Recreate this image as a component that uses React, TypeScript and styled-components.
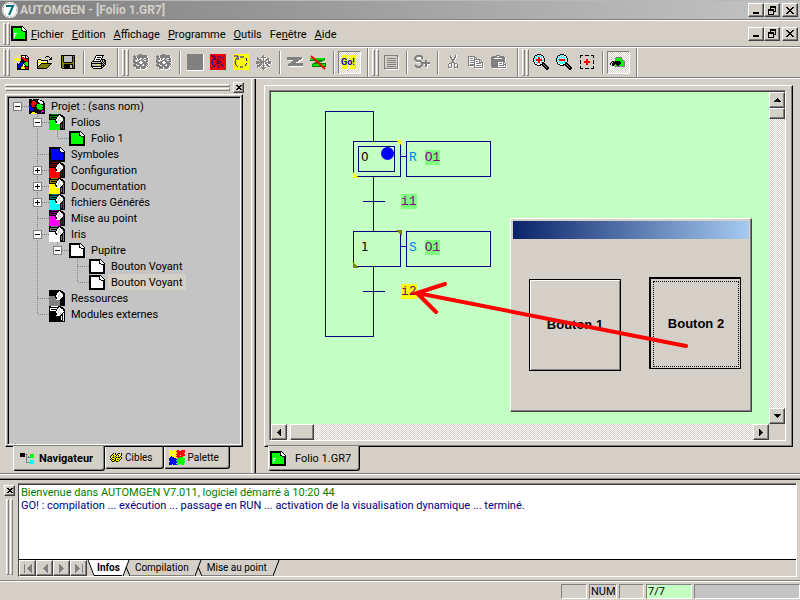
import React from "react";
import styled, { createGlobalStyle, css } from "styled-components";

const face = "#d4d0c8";
const shade = "#808080";
const dark = "#404040";
const navy = "#000080";
const dither = "repeating-conic-gradient(#ffffff 0 25%, #d4d0c8 0 50%) 0 0 / 2px 2px";

const GlobalStyle = createGlobalStyle`
  *, *::before, *::after { box-sizing: border-box; }
  body { margin: 0; background: ${face}; color: #000; font: 11px/13px Roboto, "Liberation Sans", Arial, sans-serif; }
  button { font: inherit; color: inherit; margin: 0; padding: 0; border: 0; background: none; border-radius: 0; }
  svg { display: block; flex: none; }
`;

const raised = css`
  background: ${face};
  border: 1px solid;
  border-color: #fff ${dark} ${dark} #fff;
  box-shadow: inset -1px -1px 0 ${shade};
`;

/* ---------- pixel drawings ---------- */

const palette: Record<string, string> = {
  K: "#000000", W: "#ffffff", G: "#808080", L: "#00ff00", R: "#ff0000", B: "#0000ff",
  Y: "#ffff00", O: "#808000", C: "#00ffff", M: "#ff00ff", N: "#000080", T: "#008080", S: "#c0c0c0", D: "#008000",
};

function Pixels({ rows, colors = {} }: { rows: string[]; colors?: Record<string, string> }) {
  const runs: React.ReactElement[] = [];
  rows.forEach((row, y) => {
    let x = 0;
    while (x < row.length) {
      let end = x + 1;
      while (end < row.length && row[end] === row[x]) end++;
      const fill = colors[row[x]] ?? palette[row[x]];
      if (fill) runs.push(<rect key={`${x}-${y}`} x={x} y={y} width={end - x} height={1} fill={fill} />);
      x = end;
    }
  });
  const width = Math.max(...rows.map((r) => r.length));
  return (
    <svg width={width} height={rows.length} shapeRendering="crispEdges" aria-hidden="true">
      {runs}
    </svg>
  );
}

const sheetRows = [
  "KKKKKKKKKKKK....",
  "KKKKKKKKKKKWK...",
  "KKFFFFFFFFKWWK..",
  "KKFFFFFFFFKWWWK.",
  "KKFFFFFFFFKKWWWK",
  "KKFFFFFFFFFFKKKK",
  "KKFFFFFFFFFFFFKK",
  "KKFFFFFFFFFFFFKK",
  "KKFFFFFFFFFFFFKK",
  "KKFFFFFFFFFFFFKK",
  "KKFFFFFFFFFFFFKK",
  "KKFFFFFFFFFFFFKK",
  "KKFFFFFFFFFFFFKK",
  "KKKKKKKKKKKKKKKK",
  "KKKKKKKKKKKKKKKK",
];
const folioRows = [
  ...sheetRows.slice(0, 7),
  "KKFWWWFFFFFFFFKK",
  "KKFWFFFFFFFFFFKK",
  "KKFWWFFFFFFFFFKK",
  "KKFWFFFFFFFFFFKK",
  "KKFWFFFFFFFFFFKK",
  ...sheetRows.slice(12),
];
const stackRows = [
  "KKDDDDDDDKKK....",
  "KKKKKKKKKKWKKK..",
  "KDDDDDDDKWWWKKK.",
  "KDKKKKKKWWSWWDKK",
  "KDDDDDDKWWSWWWKK",
  "KKKKKKKWWSWWWWDK",
  "FFFFFFKWWSWSWWKK",
  "FFFFFFKKWWWSWKDK",
  "FFFFFFFKSWWWKKDK",
  "FFFFFFFWWWWKKKDK",
  "FFFFFFFFFFFKDKDK",
  "FFFFFFFFFFFKDKDK",
  "FFFFFFFFFFFKDKDK",
  "FFFFFFFFFFFKDKDK",
  "FFFFFFFFFFFKKKDK",
  "FFFFFFFFFFFKKKKK",
];
const projectRows = [
  "KKK.KKKKKK......",
  "KKKKKKKKKWWKK...",
  "KKKRRRKKKWWWWKK.",
  "KKKRRRRKKKWWWWK.",
  "KKRRRRRRKKKSWWKK",
  "KKRRRRRKLLLLKKKK",
  "BKKRRKKKLLLLLLKK",
  "BBKRRRKLLLLLLLKK",
  "BBBKKKKKLLLLLKKK",
  "BBBBBKKKLLLLLLKK",
  "KBBBBKKKKKLLLKKK",
  "KBBBKKKKKKKKKMKK",
  "KKKKKKKKKKKKMMMK",
  "KKKYYYKKKKKKMKKK",
  "KKYYYYYYKKKKKKKK",
];
const newRows = [
  "...Y...KKKKKK...",
  "Y..Y..YKWWWKWK..",
  ".Y.Y.Y.KRRWKWWK.",
  "..YYY..KRRRKKKK.",
  "YYYWYYYKKRRRRRK.",
  "..YYY..KKKRRRRK.",
  ".Y.Y.YKKKKKKRRK.",
  "Y..Y..KBBKKLLLK.",
  "...K.KBBBKLLLLK.",
  "...KKBBBKWKLLLK.",
  "...KBBBBKWWKLLK.",
  "...KBBKKYYKKKKK.",
  "...KBBKYYYYKRRK.",
  "...KKKKYYYYKRRK.",
  "...KKKKKKKKKKKK.",
];
const openRows = [
  ".........KKK....",
  "........K...K.K.",
  ".............KK.",
  ".KKK........KKK.",
  "KYWYKKKKKKK.....",
  "KWYWYWYWYWK.....",
  "KYWYWYWYWYK.....",
  "KWYWKKKKKKKKKKK.",
  "KYWKOOOOOOOOOK..",
  "KWKOOOOOOOOOK...",
  "KKOOOOOOOOOK....",
  "KOOOOOOOOOK.....",
  "KKKKKKKKKK......",
];
const saveRows = [
  "KKKKKKKKKKKKKK",
  "KOKSSSSSSSSKSK",
  "KOKSSSSSSSSKKK",
  "KOKSSSSSSSSKOK",
  "KOKSSSSSSSSKOK",
  "KOKSSSSSSSSKOK",
  "KOKSSSSSSSSKOK",
  "KOOKKKKKKKKOOK",
  "KOOOOOOOOOOOOK",
  "KOOKKKKKKKKKOK",
  "KOOKKKKKKSSKOK",
  "KOOKKKKKKSSKOK",
  "KOOKKKKKKSSKOK",
  ".KKKKKKKKKKKKK",
];
const printRows = [
  ".....KKKKKKKK...",
  "....KWWWWWWK....",
  "....KWKKKKWK....",
  "...KWWWWWWK.....",
  "...KWKKKKWKKKK..",
  "..KWWWWWWKSKSKK.",
  ".KKKKKKKKKSKSKK.",
  "KSSSSSSSSSKSKSK.",
  "KKKKKKKKKKKKSKK.",
  "KSSSSSYYSSKSKSK.",
  "KSSSSSSSSSKKKK..",
  "KKKKKKKKKKKSK...",
  ".KWWWWWWWWKK....",
  "..KKKKKKKKK.....",
];
const machineRows = [
  "......GGG.......",
  ".G..GGGGGGGGGG..",
  "GGG.GGGGGGGGGGW.",
  "GGGWGGGGGGGGGGW.",
  ".GGGWGGWWGGWWGGW",
  "GGGGWGWWGGWGGGGW",
  "GGWWWWGGGGGWWGGW",
  "GGGWGGGWWGGGGGGW",
  "GGGGGGWWWWGGGGW.",
  ".GGGGGGWWGGGGGGW",
  "GGGWGGGGGGWGGGGW",
  "GGGGWWGGGWWGGGW.",
  ".GGGGGGGGGGGGWGW",
  "..WGGGGWGGGGGWW.",
  "...GGGGWGGGGWW..",
  "....WWWW.WWW....",
];
const updownRows = [
  ".......G........",
  "......GGW.......",
  ".G...GGGGG......",
  ".GG..WWGWWWGG...",
  ".GGGG..GW.GGGW..",
  "...GGGWGWGGWGW..",
  "GGG.GGGGGGW.GGG.",
  "GGGGGGGGWGGGGGGW",
  "GGG.GG.GWGGWGGGW",
  "...GGGWGWWGGWWW.",
  ".GGGGWGGGWGGGW..",
  ".GGGW..GWWW.GG..",
  ".GW..GGGGG...W..",
  "......GGGW......",
  ".......GW.......",
];
const linkRows = [
  "GGGGGGGGGGGGGGG.",
  "GGGGGGGGGGGGGGGW",
  "GGGGGGGGGGGGGGWW",
  ".WWWWWGGGGGGWWW.",
  ".....GGGGGGWW...",
  "....GGGGGWWW....",
  "..GGGGGGGGGGGGGG",
  ".GGGGGGGGGGGGGGG",
  ".GGGGGGGGGGGGGGG",
  "..WWWWWWWWWWWWWW",
];
const cutRows = [
  "..GW...GW.", "..GW...GW.", "..GGW.GGW.", "...GW.GW..", "...GGGGW..", "....GGW...",
  "....GGW...", "...GGGGW..", ".GGGW.GGG.", "GWWGW.GWWG", "GW.GW.GW.G", "GW.GW.GW.G", "GGGGW.GGGG", ".WWW...WW.",
];
const copyRows = [
  "GGGGGGG.........", "GWWWWWGG........", "GWGGGWGWG.......", "GWWWWWGGGGGG....", "GWGGGGGWWWWGG...",
  "GWWWWWGWGGWGWG..", "GWGGGGGWWWWGGGG.", "GWWWWWGWGGGGGWGW", "GWGGGGGWWWWWWWGW", "GGGGGGGWGGGGGWGW",
  ".WWWWWGWWWWWWWGW", "......GGGGGGGGGW", ".......WWWWWWWWW",
];
const pasteRows = [
  ".....GGGG.......", ".GGGGGWWGGGGG...", "GGGGGGGGGGGGGG..", "GGGWWWWWWWWGGGW.", "GGGGGGGGGGGGGGW.",
  "GGGGGGGGGGGGGGW.", "GGGGGGGGGGGGGGW.", "GGGGGGGWWWWWGG..", "GGGGGGGWGGGWGWG.", "GGGGGGGWWWWWGGGW",
  "GGGGGGGWGGGGGWGW", "GGGGGGGWWWWWWWGW", ".GGGGGGGGGGGGGGW", "..WWWWWWWWWWWWWW",
];
const zoomRows = (plus: boolean) => [
  "....KKKK........", "..KKCWCWKK......", ".KWCWCWCWWK.....", ".KCW" + (plus ? "WRR" : "CWC") + "WCWK.....",
  "KCWC" + (plus ? "WRR" : "WCW") + "WCWWK....", "KWCRRRRRRWCK....", "KCWRRRRRRCWK....",
  "KWCW" + (plus ? "WRR" : "WCW") + "WCWWK....", ".KWC" + (plus ? "CRR" : "CWC") + "WCKK.....",
  ".KWWCWCWWKKK....", "..KKWWWKKKGKK...", "....KKKK.KKGKK..", "..........KKGKK.", "...........KKGKK", "............KKKK", ".............KK.",
];
const targetRows = [
  "KKK..KKKK..KKK", "K............K", "K............K", "..............", "......RR......",
  "K.....RR.....K", "K...RRRRRR...K", "K...RRRRRR...K", "K.....RR.....K", "......RR......",
  "..............", "K............K", "K............K", "KKK..KKKK..KKK",
];
const watchRows = [
  "......GGGGGG....", ".....GLLLLLG.W..", ".....GLLLLLGGW..", ".....GLLLLLLLG..", "..KKGKKKKKLLLLG.",
  ".K.KKKKKKKKLLLG.", "K.KKKKKKKKKLLLG.", "K.KKKLKKKKLLLLG.", "..KKGLLKKLLLLLG.", ".....GGGGGGGGGG.",
];
const navRows = [
  "KKKKK..........", "KKKKKGGG..LLLL", "KKKKK.G...LLLL", "KKKKK.G.G.LLLL", "......GGGGLLLL", "......G.......",
  "......G.......", "......G...CCCC", "......G...CCCC", "......GGGGCCCC", "..........CCCC",
];
const targetsRows = [
  "...K.K..KK.K", "..KYYK.KYYYK", ".KYKYYKYKYYK", "KYYOYKYYOYKY", "KYOKOYKOKKYK", ".KYYYKYYYOYK", "KYKOYKYKOYK.", ".KYYKKYYYK..", "..KKO.KKO...",
];
const paletteRows = [
  "YYY.YYYYRR..RRRR", "YYYYYYYRRRRRRRRR", ".YYYYYYYRRRRRRRR", "YYYYYYYYRRRRRRR.", "YYY.YYYRRRRRRRRR", "YYYYYYYYRRR.RRRR",
  "..BYYYYRRRRRRR..", ".BBBBYYYLRRLLL..", "BBBBBBB.LLLLLLLL", "BBBBBBBBLLLLLLLL", "BBBBBBBLLLLLLLL.", ".BBBBBBBLLLLLLLL",
  "BBBBBBBBLLLLLLLL", "BBBBBBB.LLLLLLL.", "BBB.BBBBLL..LLL.",
];

const LoopIcon = ({ bg, crossed }: { bg: string; crossed?: boolean }) => (
  <svg width="16" height="16" aria-hidden="true">
    <rect width="16" height="16" fill={bg} />
    <path d="M5 2H1M5 2V6M4 4C1 7 2 11 5 13M7 13H10M12 12L14 9M14 7L13 4M11 3H7" fill="none" stroke="#0000c0" strokeWidth="1" />
    {crossed && <path d="M1 1L15 15M15 1L1 15M5 8H12M8 4V12" stroke="#400040" strokeWidth="1" />}
  </svg>
);

const LogoIcon = () => (
  <svg width="16" height="16" aria-hidden="true">
    <circle cx="8" cy="8" r="8" fill="#ffffff" />
    <circle cx="8" cy="8" r="7" fill="none" stroke="#a0a0a0" strokeDasharray="2 1" />
    <path d="M4 4H11L7 13" fill="none" stroke="#007080" strokeWidth="2" />
  </svg>
);

const CrossGlyph = () => (
  <Pixels rows={["KK....KK", ".KK..KK.", "..KKKK..", "...KK...", "..KKKK..", ".KK..KK.", "KK....KK"]} />
);
const SmallCross = () => <Pixels rows={["KK..KK", ".KKKK.", "..KK..", ".KKKK.", "KK..KK"]} />;

/* ---------- caption buttons ---------- */

const CaptionButton = styled.button`
  ${raised}
  width: 16px;
  height: 14px;
  display: flex;
  align-items: center;
  justify-content: center;
  &:last-child { margin-left: 2px; }
`;
const CaptionGroup = styled.div`
  display: flex;
  margin-left: auto;
  padding-right: 2px;
`;

function Captions() {
  return (
    <CaptionGroup>
      <CaptionButton aria-label="Réduire"><Pixels rows={["......", "......", "......", "......", "......", "KKKKKK", "KKKKKK"]} /></CaptionButton>
      <CaptionButton aria-label="Restaurer">
        <Pixels rows={["..KKKKKK", "..KKKKKK", "..K....K", "KKKKKK.K", "KKKKKK.K", "K....KKK", "K....K..", "K....K..", "KKKKKK.."]} />
      </CaptionButton>
      <CaptionButton aria-label="Fermer"><CrossGlyph /></CaptionButton>
    </CaptionGroup>
  );
}

/* ---------- frame ---------- */

const Page = styled.div`
  height: 100vh;
  display: flex;
  flex-direction: column;
  overflow: hidden;
  background: ${face};
`;
const TitleBar = styled.header`
  height: 20px;
  flex: none;
  display: flex;
  align-items: center;
  padding-left: 2px;
  gap: 2px;
  background: linear-gradient(to right, #808080, #c4c4c4);
  border-top: 1px solid #b8b8b8;
  border-bottom: 1px solid ${shade};
`;
const TitleText = styled.h1`
  margin: 0;
  font-size: 12px;
  line-height: 16px;
  font-weight: bold;
  color: ${face};
`;
const MenuBar = styled.nav`
  height: 27px;
  flex: none;
  display: flex;
  align-items: center;
  padding-left: 3px;
  border-top: 1px solid #fff;
  border-bottom: 1px solid ${shade};
`;
const MenuItem = styled.button`
  padding: 3px 4px 1px;
  u { text-underline-offset: 1px; }
`;
const MenuItems = styled.div`
  display: flex;
`;
const Grip = styled.span<{ $length: number; $flat?: boolean }>`
  display: flex;
  flex: none;
  gap: 1px;
  flex-direction: ${(p) => (p.$flat ? "column" : "row")};
  margin-right: ${(p) => (p.$flat ? 0 : 1)}px;
  &::before, &::after {
    content: "";
    border: 1px solid;
    border-color: #fff ${shade} ${shade} #fff;
    ${(p) => (p.$flat ? "height: 3px;" : `width: 3px; height: ${p.$length}px;`)}
  }
`;
const ToolBar = styled.div`
  height: 31px;
  flex: none;
  display: flex;
  border-top: 1px solid #fff;
  border-bottom: 1px solid ${shade};
`;
const Band = styled.div`
  display: flex;
  align-items: center;
  padding: 0 6px 0 3px;
  border-right: 1px solid ${shade};
  box-shadow: 1px 0 0 #fff;
  margin-right: 1px;
`;
const ToolButton = styled.button<{ $pressed?: boolean }>`
  width: 23px;
  height: 23px;
  padding: 0 1px 1px 0;
  display: flex;
  align-items: center;
  justify-content: center;
  ${(p) => p.$pressed && css`
    background: ${dither};
    border: 1px solid;
    border-color: ${shade} #fff #fff ${shade};
  `}
`;
const Separator = styled.span`
  width: 2px;
  height: 23px;
  margin: 0 3px;
  background: ${shade};
  border-right: 1px solid #fff;
`;

/* ---------- main area ---------- */

const Main = styled.main`
  flex: 1;
  min-height: 0;
  display: flex;
  border-top: 1px solid #fff;
  border-bottom: 1px solid ${shade};
`;
const SidePanel = styled.aside`
  width: 252px;
  flex: none;
  display: flex;
  flex-direction: column;
  padding: 1px 7px 2px 5px;
  border-right: 1px solid #fff;
`;
const SideHead = styled.div`
  display: flex;
  align-items: center;
  gap: 3px;
  height: 14px;
  ${Grip} { flex: 1; }
`;
const SmallClose = styled.button`
  ${raised}
  width: 11px;
  height: 11px;
  display: flex;
  align-items: center;
  justify-content: center;
`;
const Raised = styled.div`
  flex: 1;
  min-height: 0;
  display: flex;
  border: 1px solid;
  border-color: #fff #000 #000 #fff;
  box-shadow: inset -1px -1px 0 ${shade};
`;
const TreeFrame = styled(Raised)`
  padding: 1px;
  margin-right: 1px;
`;
const ViewFrame = styled(Raised)`
  padding: 4px 6px 5px 4px;
`;
const Sunken = styled.div`
  flex: 1;
  min-width: 0;
  border: 1px solid;
  border-color: ${shade} #fff #fff ${shade};
  display: flex;
`;
const Tree = styled.ul`
  flex: 1;
  margin: 0;
  padding: 0;
  list-style: none;
  background: #c4c4c4;
  border-top: 1px solid #000;
  border-left: 1px solid #000;
`;
const TreeRow = styled.li`
  display: flex;
  align-items: center;
  height: 16px;
`;
const Guide = styled.span`
  display: grid;
  width: 20px;
  height: 16px;
  > * { grid-area: 1 / 1; }
`;
const Expander = styled.button`
  width: 9px;
  height: 9px;
  margin: 4px 0 0 4px;
  background: #fff;
  border: 1px solid ${shade};
  display: flex;
  align-items: center;
  justify-content: center;
`;
const TreeLabel = styled.span<{ $selected?: boolean }>`
  margin-left: 3px;
  padding: 2px 3px 0;
  line-height: 14px;
  background: ${(p) => (p.$selected ? face : "transparent")};
`;

type Node = { label: string; level: number; icon: "project" | "stack" | "sheet"; color: string; back?: string; box?: "+" | "-"; guides: string[]; selected?: boolean };

/* guide codes: "" blank, "|" through line, "+" branch, "L" last branch, "-" stub */
const nodes: Node[] = [
  { label: "Projet : (sans nom)", level: 0, icon: "project", color: "", box: "-", guides: ["-"] },
  { label: "Folios", level: 1, icon: "stack", color: "#00ff00", back: "#008000", box: "-", guides: ["", "+"] },
  { label: "Folio 1", level: 2, icon: "sheet", color: "#00ff00", guides: ["", "|", "L"] },
  { label: "Symboles", level: 1, icon: "sheet", color: "#0000ff", guides: ["", "+"] },
  { label: "Configuration", level: 1, icon: "stack", color: "#ff0000", back: "#800000", box: "+", guides: ["", "+"] },
  { label: "Documentation", level: 1, icon: "stack", color: "#ffff00", back: "#808000", box: "+", guides: ["", "+"] },
  { label: "fichiers Générés", level: 1, icon: "stack", color: "#00ffff", back: "#008080", box: "+", guides: ["", "+"] },
  { label: "Mise au point", level: 1, icon: "stack", color: "#ff00ff", back: "#800080", guides: ["", "+"] },
  { label: "Iris", level: 1, icon: "stack", color: "#ffffff", back: "#808080", box: "-", guides: ["", "+"] },
  { label: "Pupitre", level: 2, icon: "sheet", color: "#ffffff", box: "-", guides: ["", "|", "L"] },
  { label: "Bouton Voyant", level: 3, icon: "sheet", color: "#ffffff", guides: ["", "|", "", "+"] },
  { label: "Bouton Voyant", level: 3, icon: "sheet", color: "#ffffff", guides: ["", "|", "", "L"], selected: true },
  { label: "Ressources", level: 1, icon: "stack", color: "#808080", back: "#000000", guides: ["", "+"] },
  { label: "Modules externes", level: 1, icon: "stack", color: "#000000", back: "#ffffff", guides: ["", "L"] },
];

function GuideLines({ kind }: { kind: string }) {
  return (
    <svg width="20" height="16" aria-hidden="true" stroke="#808080" strokeDasharray="1 1" shapeRendering="crispEdges">
      {(kind === "|" || kind === "+") && <path d="M8.5 0V16" />}
      {kind === "L" && <path d="M8.5 0V8" />}
      {(kind === "+" || kind === "L" || kind === "-") && <path d="M9 8.5H20" />}
    </svg>
  );
}

function TreeItem({ node }: { node: Node }) {
  return (
    <TreeRow>
      {node.guides.map((g, i) => (
        <Guide key={i}>
          <GuideLines kind={g} />
          {i === node.level && node.box && (
            <Expander aria-label={node.box === "+" ? "Développer" : "Réduire"}>
              <Pixels rows={node.box === "+" ? ["..K..", "..K..", "KKKKK", "..K..", "..K.."] : ["KKKKK"]} />
            </Expander>
          )}
        </Guide>
      ))}
      {node.icon === "project" && <Pixels rows={projectRows} />}
      {node.icon === "stack" && <Pixels rows={stackRows} colors={{ F: node.color, D: node.back ?? "" }} />}
      {node.icon === "sheet" && <Pixels rows={sheetRows} colors={{ F: node.color }} />}
      <TreeLabel $selected={node.selected}>{node.label}</TreeLabel>
    </TreeRow>
  );
}

const TabStrip = styled.div<{ $indent: number }>`
  display: flex;
  align-items: flex-start;
  height: 24px;
  flex: none;
  padding-left: ${(p) => p.$indent}px;
`;
const Tab = styled.button<{ $active?: boolean }>`
  display: flex;
  align-items: center;
  gap: 4px;
  height: ${(p) => (p.$active ? 25 : 22)}px;
  padding: 0 11px 0 6px;
  margin-top: ${(p) => (p.$active ? -1 : 0)}px;
  background: ${face};
  font-weight: ${(p) => (p.$active ? "bold" : "normal")};
  border: solid #000;
  border-width: 0 1px 1px 0;
  border-left: 1px solid #fff;
  border-radius: 0 0 3px 3px;
  box-shadow: inset -1px -1px 0 ${shade};
`;
const SmallTab = styled(Tab)`
  font-size: 10px;
  gap: 3px;
  padding: 0 10px 0 4px;
`;
const FolioTab = styled(Tab)`
  font-weight: normal;
  gap: 9px;
  padding: 0 8px 0 1px;
`;

const WorkArea = styled.section`
  flex: 1;
  min-width: 0;
  display: flex;
  flex-direction: column;
  margin-left: 2px;
  padding: 6px 7px 2px 9px;
  border-left: 1px solid ${shade};
  box-shadow: inset 1px 0 0 #000;
`;
const View = styled.div`
  flex: 1;
  min-width: 0;
  display: grid;
  grid-template: minmax(0, 1fr) 16px / minmax(0, 1fr) 16px;
  border-top: 1px solid ${dark};
  border-left: 1px solid ${dark};
`;
const Canvas = styled.div`
  position: relative;
  overflow: hidden;
  background: #c4ffc4;
`;
const ScrollTrack = styled.div<{ $vertical?: boolean }>`
  display: flex;
  flex-direction: ${(p) => (p.$vertical ? "column" : "row")};
  background: ${dither};
`;
const ScrollButton = styled.button`
  ${raised}
  width: 16px;
  height: 16px;
  display: flex;
  align-items: center;
  justify-content: center;
`;
const Thumb = styled.div<{ $vertical?: boolean }>`
  ${raised}
  ${(p) => (p.$vertical ? "height: 11px; margin-bottom: auto;" : "width: 24px; margin: 0 auto 0 3px;")}
`;

/* ---------- diagram ---------- */

const Placed = styled.div<{ $x: number; $y: number }>`
  position: absolute;
  left: ${(p) => p.$x}px;
  top: ${(p) => p.$y}px;
`;
const Wires = styled.svg`
  position: absolute;
  left: 0;
  top: 0;
`;
const mono = css`
  font: 13px/15px "Liberation Mono", "Courier New", monospace;
`;
const StepBox = styled(Placed)<{ $mark: string }>`
  font: 12px/15px "DejaVu Sans", Verdana, sans-serif;
  width: 48px;
  height: 36px;
  padding: 8px 7px;
  border: 1px solid ${navy};
  &::before, &::after {
    content: "";
    position: absolute;
    width: 6px;
    height: 6px;
    background: ${(p) => p.$mark};
  }
  &::before { top: -2px; right: -2px; clip-path: polygon(0 0, 100% 0, 100% 100%); }
  &::after { bottom: -2px; left: -1px; clip-path: polygon(0 0, 100% 100%, 0 100%); }
`;
const ActiveRing = styled.span`
  position: absolute;
  inset: 4px 5px 4px 4px;
  border: 1px solid ${navy};
  &::after {
    content: "";
    position: absolute;
    right: 0;
    top: 0;
    width: 13px;
    height: 13px;
    border-radius: 50%;
    background: #0000ff;
  }
`;
const ActionBox = styled(Placed)`
  ${mono}
  display: flex;
  gap: 8px;
  width: 85px;
  height: 36px;
  padding: 8px 2px;
  color: #0080ff;
  border: 1px solid ${navy};
`;
const Tag = styled.span<{ $bg?: string }>`
  ${mono}
  align-self: flex-start;
  color: #800080;
  background: ${(p) => p.$bg ?? "#80ff80"};
`;

const Desk = styled(Placed)`
  ${raised}
  width: 242px;
  height: 194px;
  padding: 2px;
`;
const DeskTitle = styled.div`
  height: 18px;
  background: linear-gradient(to right, #0a246a, #a6caf0);
`;
const DeskBody = styled.div`
  display: flex;
  justify-content: space-between;
  align-items: flex-start;
  padding: 38px 8px 0 16px;
`;
const DeskButton = styled.button<{ $focused?: boolean }>`
  width: 92px;
  height: 92px;
  margin-top: ${(p) => (p.$focused ? 0 : 2)}px;
  font: bold 13px/16px "Liberation Sans", Arial, sans-serif;
  border: 1px solid #000;
  ${(p) => p.$focused
    ? css`
        border-width: 2px 1px 1px 2px;
        padding: 2px 1px 1px 2px;
        > span { display: grid; place-items: center; height: 100%; border: 1px dotted #000; }
      `
    : css`box-shadow: inset 1px 1px 0 #fff, inset -1px -1px 0 ${shade};`}
`;

function Diagram() {
  return (
    <Canvas>
      <Wires width="240" height="260" fill="none" stroke={navy} shapeRendering="crispEdges" aria-hidden="true">
        <path d="M102.5 49V19.5H54.5V244.5H102.5V175M102.5 85V139M92 109.5H114M92 199.5H114M129 64.5H135M129 154.5H135" />
      </Wires>
      <StepBox $x={82} $y={49} $mark="#ffff00">0<ActiveRing /></StepBox>
      <ActionBox $x={135} $y={49}>R <Tag>O1</Tag></ActionBox>
      <Placed $x={130} $y={102}><Tag as="div">i1</Tag></Placed>
      <StepBox $x={82} $y={139} $mark="#808000">1</StepBox>
      <ActionBox $x={135} $y={139}>S <Tag>O1</Tag></ActionBox>
      <Placed $x={130} $y={192}><Tag as="div" $bg="#ffff00">i2</Tag></Placed>
      <Desk $x={239} $y={126}>
        <DeskTitle />
        <DeskBody>
          <DeskButton>Bouton 1</DeskButton>
          <DeskButton $focused><span>Bouton 2</span></DeskButton>
        </DeskBody>
      </Desk>
      <Wires width="440" height="270" fill="none" stroke="#ff0000" strokeWidth="4" strokeLinecap="round" pointerEvents="none" aria-hidden="true">
        <path d="M415 254L146 201L174 192M146 201L165 220" />
      </Wires>
    </Canvas>
  );
}

/* ---------- output and status ---------- */

const Splitter = styled.div`
  height: 6px;
  flex: none;
  border-top: 1px solid #fff;
  border-bottom: 1px solid #000;
  box-shadow: inset 0 -1px 0 ${shade};
`;
const OutputPanel = styled.section`
  height: 101px;
  flex: none;
  display: flex;
  gap: 3px;
  padding: 3px 3px 3px 4px;
  border-bottom: 1px solid ${shade};
`;
const OutputSide = styled.div`
  width: 11px;
  display: flex;
  flex-direction: column;
  align-items: center;
  gap: 3px;
  padding-top: 2px;
  ${Grip} { margin: 0; }
`;
const OutputBox = styled.div`
  flex: 1;
  min-width: 0;
  display: flex;
  flex-direction: column;
  border: 1px solid;
  border-color: ${shade} #fff #fff ${dark};
`;
const Log = styled.div`
  flex: 1;
  padding: 1px 2px;
  background: #fff;
  border-top: 1px solid ${dark};
  border-bottom: 1px solid #000;
`;
const LogLine = styled.p<{ $color: string }>`
  margin: 0;
  color: ${(p) => p.$color};
`;
const SheetBar = styled.div`
  display: flex;
  height: 16px;
`;
const SheetNav = styled.button`
  ${raised}
  width: 17px;
  height: 16px;
  display: flex;
  align-items: center;
  justify-content: center;
`;
const SheetTab = styled.button<{ $active?: boolean }>`
  padding: 0 ${(p) => (p.$active ? 2 : 5)}px;
  background: ${(p) => (p.$active ? "#fff" : "transparent")};
  font-size: 10px;
  font-weight: ${(p) => (p.$active ? "bold" : "normal")};
  border-bottom: 1px solid ${(p) => (p.$active ? "#000" : shade)};
`;
const StatusBar = styled.footer`
  height: 19px;
  flex: none;
  display: flex;
  justify-content: flex-end;
  gap: 2px;
  padding: 2px 0 1px;
  border-top: 1px solid #fff;
`;
const StatusCell = styled.div<{ $width: number; $bg?: string }>`
  width: ${(p) => p.$width}px;
  padding-left: 1px;
  line-height: 14px;
  background: ${(p) => p.$bg ?? "transparent"};
  border: 1px solid;
  border-color: ${shade} #fff #fff ${shade};
`;

const arrowLeft = ["...K", "..KK", ".KKK", "KKKK", ".KKK", "..KK", "...K"];
const arrowRight = arrowLeft.map((r) => r.split("").reverse().join(""));
const arrowUp = ["...K...", "..KKK..", ".KKKKK.", "KKKKKKK"];
const arrowDown = [...arrowUp].reverse();
const navLeft = [".....K", "....KK", "...KKK", "..KKKK", ".KKKKK", "..KKKK", "...KKK", "....KK", ".....K"];
const navRight = navLeft.map((r) => r.split("").reverse().join(""));
const gray = { K: "#808080" };

const menus = [["", "F", "ichier"], ["", "E", "dition"], ["", "A", "ffichage"], ["", "P", "rogramme"], ["", "O", "utils"], ["Fe", "n", "être"], ["", "A", "ide"]];

export default function App() {
  return (
    <Page>
      <GlobalStyle />
      <TitleBar>
        <LogoIcon />
        <TitleText>AUTOMGEN - [Folio 1.GR7]</TitleText>
        <Captions />
      </TitleBar>
      <MenuBar>
        <Grip $length={22} />
        <Pixels rows={folioRows} colors={{ F: "#00ff00" }} />
        <MenuItems>
          {menus.map(([a, b, c]) => <MenuItem key={a + b + c}>{a}<u>{b}</u>{c}</MenuItem>)}
        </MenuItems>
        <Captions />
      </MenuBar>
      <ToolBar>
        <Band>
          <Grip $length={27} />
          <ToolButton aria-label="Nouveau"><Pixels rows={newRows} /></ToolButton>
          <ToolButton aria-label="Ouvrir"><Pixels rows={openRows} /></ToolButton>
          <ToolButton aria-label="Enregistrer"><Pixels rows={saveRows} /></ToolButton>
          <Separator />
          <ToolButton aria-label="Imprimer"><Pixels rows={printRows} /></ToolButton>
        </Band>
        <Band>
          <Grip $length={27} />
          <ToolButton aria-label="Compiler"><Pixels rows={machineRows} /></ToolButton>
          <ToolButton aria-label="Compiler tout"><Pixels rows={machineRows} /></ToolButton>
          <Separator />
          <ToolButton aria-label="Arrêt">
            <svg width="17" height="17" aria-hidden="true"><path d="M0 0H17V17H0Z" fill="#fff" /><path d="M0 0H16V16H0Z" fill="#808080" /></svg>
          </ToolButton>
          <ToolButton aria-label="Stop"><LoopIcon bg="#ff0000" crossed /></ToolButton>
          <ToolButton aria-label="Cycle"><LoopIcon bg="#ffff00" /></ToolButton>
          <ToolButton aria-label="Pas"><Pixels rows={updownRows} /></ToolButton>
          <Separator />
          <ToolButton aria-label="Connecter"><Pixels rows={linkRows} /></ToolButton>
          <ToolButton aria-label="Déconnecter">
            <svg width="16" height="15" aria-hidden="true">
              <path d="M0 3H15V5L9 8H16V12H2V9L7 6H0Z" fill="#008000" />
              <path d="M0 3H14V5H0ZM3 9H15V11H3Z" fill="#00e000" />
              <path d="M1 1L15 14" stroke="#ff0000" strokeWidth="2" />
            </svg>
          </ToolButton>
          <Separator />
          <ToolButton $pressed aria-label="Go">
            <svg width="16" height="16" aria-hidden="true">
              <path d="M1 1H7V15H1ZM9 1H15V15H9Z" fill="#ffff00" />
              <text x="0" y="11" fontSize="9" fontWeight="bold" fill="#0000c0">Go!</text>
            </svg>
          </ToolButton>
        </Band>
        <Band>
          <Grip $length={27} />
          <ToolButton aria-label="Liste">
            <svg width="15" height="15" shapeRendering="crispEdges" aria-hidden="true">
              <path d="M1.5 14.5H14.5V1.5" stroke="#fff" fill="none" />
              <path d="M.5 .5H13.5V13.5H.5ZM3 3.5H12M3 5.5H12M3 7.5H12M3 9.5H12M3 11.5H12" stroke="#808080" fill="none" />
            </svg>
          </ToolButton>
          <Separator />
          <ToolButton aria-label="Ajouter un symbole">
            <svg width="16" height="14" fill="none" strokeWidth="2" aria-hidden="true">
              <path d="M9 3V3H3L2 5L3 7H7L8 9L7 12H2M13 6V13M10 9H17" stroke="#fff" />
              <path d="M8 4V2L7 1H3L1 3V4L3 6H6L8 8V10L6 12H3L1 10M12 5V12M8 8H16" stroke="#808080" />
            </svg>
          </ToolButton>
          <Separator />
          <ToolButton aria-label="Couper"><Pixels rows={cutRows} /></ToolButton>
          <ToolButton aria-label="Copier"><Pixels rows={copyRows} /></ToolButton>
          <ToolButton aria-label="Coller"><Pixels rows={pasteRows} /></ToolButton>
        </Band>
        <Band>
          <Grip $length={27} />
          <ToolButton aria-label="Zoom avant"><Pixels rows={zoomRows(true)} /></ToolButton>
          <ToolButton aria-label="Zoom arrière"><Pixels rows={zoomRows(false)} /></ToolButton>
          <ToolButton aria-label="Zoom sélection"><Pixels rows={targetRows} /></ToolButton>
          <Separator />
          <ToolButton $pressed aria-label="Visualisation"><Pixels rows={watchRows} /></ToolButton>
        </Band>
      </ToolBar>
      <Main>
        <SidePanel>
          <SideHead>
            <Grip $length={0} $flat />
            <SmallClose aria-label="Fermer le navigateur"><SmallCross /></SmallClose>
          </SideHead>
          <TreeFrame>
            <Sunken>
              <Tree>{nodes.map((n, i) => <TreeItem key={i} node={n} />)}</Tree>
            </Sunken>
          </TreeFrame>
          <TabStrip $indent={8}>
            <Tab $active><Pixels rows={navRows} />Navigateur</Tab>
            <SmallTab><Pixels rows={targetsRows} />Cibles</SmallTab>
            <SmallTab><Pixels rows={paletteRows} />Palette</SmallTab>
          </TabStrip>
        </SidePanel>
        <WorkArea>
          <ViewFrame>
            <Sunken>
              <View>
                <Diagram />
                <ScrollTrack $vertical>
                  <ScrollButton aria-label="Haut"><Pixels rows={arrowUp} /></ScrollButton>
                  <Thumb $vertical />
                  <ScrollButton aria-label="Bas"><Pixels rows={arrowDown} /></ScrollButton>
                </ScrollTrack>
                <ScrollTrack>
                  <ScrollButton aria-label="Gauche"><Pixels rows={arrowLeft} /></ScrollButton>
                  <Thumb />
                  <ScrollButton aria-label="Droite"><Pixels rows={arrowRight} /></ScrollButton>
                </ScrollTrack>
              </View>
            </Sunken>
          </ViewFrame>
          <TabStrip $indent={4}>
            <FolioTab $active><Pixels rows={folioRows} colors={{ F: "#00ff00" }} />Folio 1.GR7</FolioTab>
          </TabStrip>
        </WorkArea>
      </Main>
      <Splitter />
      <OutputPanel>
        <OutputSide>
          <SmallClose aria-label="Fermer les messages"><SmallCross /></SmallClose>
          <Grip $length={76} />
        </OutputSide>
        <OutputBox>
          <Log>
            <LogLine $color="#008000">Bienvenue dans AUTOMGEN V7.011, logiciel démarré à 10:20 44</LogLine>
            <LogLine $color={navy}>GO! : compilation ... exécution ... passage en RUN ... activation de la visualisation dynamique ... terminé.</LogLine>
          </Log>
          <SheetBar>
            <SheetNav aria-label="Premier"><Pixels rows={navLeft.map((r) => "K." + r)} colors={gray} /></SheetNav>
            <SheetNav aria-label="Précédent"><Pixels rows={navLeft} colors={gray} /></SheetNav>
            <SheetNav aria-label="Suivant"><Pixels rows={navRight} colors={gray} /></SheetNav>
            <SheetNav aria-label="Dernier"><Pixels rows={navRight.map((r) => r + ".K")} colors={gray} /></SheetNav>
            <svg width="8" height="16" aria-hidden="true"><path d="M0 0H8V16H7Z" fill="#fff" /><path d="M1 0L7 15.5H8" fill="none" stroke="#000" /></svg>
            <SheetTab $active>Infos</SheetTab>
            <svg width="8" height="16" aria-hidden="true"><path d="M0 0H7L1 16H0Z" fill="#fff" /><path d="M7 0L1 16M4 7L8 16" fill="none" stroke="#000" /></svg>
            <SheetTab>Compilation</SheetTab>
            <svg width="8" height="16" aria-hidden="true"><path d="M7 0L1 16M4 7L8 16" fill="none" stroke="#000" /></svg>
            <SheetTab>Mise au point</SheetTab>
            <svg width="8" height="16" aria-hidden="true"><path d="M7 0L1 16" fill="none" stroke="#000" /></svg>
          </SheetBar>
        </OutputBox>
      </OutputPanel>
      <StatusBar>
        <StatusCell $width={26} />
        <StatusCell $width={28}>NUM</StatusCell>
        <StatusCell $width={25} />
        <StatusCell $width={46} $bg="#c4ffc4">7/7</StatusCell>
        <StatusCell $width={106} $bg="#c4c4c4" />
      </StatusBar>
    </Page>
  );
}
